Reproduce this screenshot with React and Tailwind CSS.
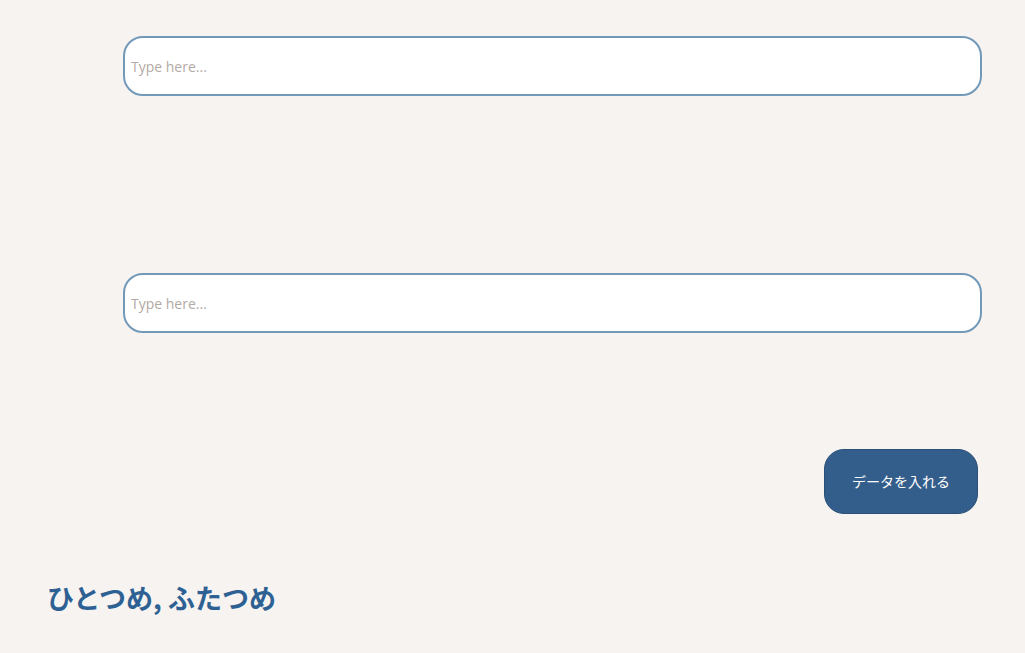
export default function App() {
  return (
    <div className="min-h-[653px] w-full bg-[#f7f3f0] pt-[36px] font-['Open_Sans','Noto_Sans_CJK_JP',sans-serif]">
      <div className="flex flex-col pl-[123px] pr-[43px]">
        <input
          type="text"
          placeholder="Type here..."
          className="h-[60px] w-full rounded-[20px] border-2 border-[#7399b9] bg-white px-[6px] text-[14px] text-[#333] outline-none placeholder:text-[#b3aaa5]"
        />
        <div className="h-[177px]" />
        <input
          type="text"
          placeholder="Type here..."
          className="h-[60px] w-full rounded-[20px] border-2 border-[#7399b9] bg-white px-[6px] text-[14px] text-[#333] outline-none placeholder:text-[#b3aaa5]"
        />
      </div>
      <div className="flex justify-end pr-[47px] pt-[116px]">
        <button className="h-[65px] w-[154px] rounded-[20px] border border-[#2b5078] bg-[#335d8a] text-[14px] text-white font-['Noto_Sans_CJK_JP',sans-serif]">
          データを入れる
        </button>
      </div>
      <h2 className="pl-[47px] pt-[66px] text-[27px] font-bold leading-[36px] text-[#2e6193] font-['Noto_Sans_CJK_JP',sans-serif]">
        ひとつめ, ふたつめ
      </h2>
    </div>
  );
}
